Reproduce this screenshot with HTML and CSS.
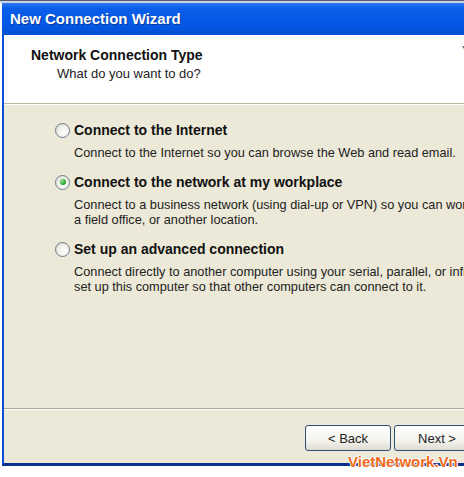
FILE: index.html
```html
<!DOCTYPE html>
<html lang="en">
<head>
  <meta charset="UTF-8" />
  <title>New Connection Wizard</title>
  <link rel="stylesheet" href="styles.css">
</head>
<body>
  <div class="desk-top"></div>
  <div class="window">
    <div class="titlebar">New Connection Wizard</div>

    <div class="header">
      <div class="header-text">
        <h1>Network Connection Type</h1>
        <p>What do you want to do?</p>
      </div>
      <div class="header-icon">Y</div>
    </div>

    <div class="body">
      <div class="options">
        <label class="option">
          <span class="radio"></span>
          <span class="option-title">Connect to the Internet</span>
        </label>
        <div class="option-desc">Connect to the Internet so you can browse the Web and read email.</div>

        <label class="option">
          <span class="radio checked"></span>
          <span class="option-title">Connect to the network at my workplace</span>
        </label>
        <div class="option-desc">Connect to a business network (using dial-up or VPN) so you can wor<br>a field office, or another location.</div>

        <label class="option">
          <span class="radio"></span>
          <span class="option-title">Set up an advanced connection</span>
        </label>
        <div class="option-desc">Connect directly to another computer using your serial, parallel, or infra<br>set up this computer so that other computers can connect to it.</div>
      </div>

      <div class="footer">
        <button class="btn">&lt; Back</button>
        <button class="btn">Next &gt;</button>
      </div>
    </div>
  </div>

  <div class="watermark">VietNetwork.Vn</div>
</body>
</html>
```

FILE: styles.css
```css
body {
  margin: 0;
  width: 464px;
  height: 477px;
  overflow: hidden;
  position: relative;
  background: #ffffff;
  font-family: 'Liberation Sans', Arial, sans-serif;
}

.desk-top {
  height: 3px;
  background: linear-gradient(#555b6e 0, #555b6e 1px, #c9d3e6 1px);
}

.window {
  margin-left: 2px;
  width: 480px;
  border-left: 2px solid #0a4fd4;
  border-bottom: 3px solid #0b2f8c;
  background: #ece9d8;
}

.titlebar {
  height: 32px;
  line-height: 31px;
  margin-left: -2px;
  padding-left: 8px;
  color: #fff;
  font-size: 15px;
  font-weight: bold;
  background: linear-gradient(#2e79f0 0%, #0a5ee8 15%, #0457e4 70%, #0350d2 100%);
  text-shadow: 1px 1px 0 #0a3a9a;
}

.header {
  height: 68px;
  background: #ffffff;
  border-bottom: 1px solid #b8b4a2;
  box-shadow: 0 1px 0 #ffffff;
  display: flex;
  justify-content: space-between;
}

.header-text {
  padding: 12px 0 0 27px;
}

.header h1 {
  margin: 0;
  font-size: 14px;
  font-weight: bold;
  color: #111;
  line-height: 17px;
}

.header p {
  margin: 2px 0 0 26px;
  font-size: 13px;
  color: #222;
  line-height: 16px;
}

.header-icon {
  width: 10px;
  padding-top: 9px;
  margin-right: 12px;
  font-size: 11px;
  color: #333;
}

.body {
  padding-top: 18px;
}

.options {
  padding-left: 51px;
  height: 286px;
}

.option {
  display: flex;
  align-items: center;
  height: 16px;
  gap: 4px;
}

.option-title {
  font-size: 14px;
  font-weight: bold;
  color: #111;
}

.radio {
  width: 13px;
  height: 13px;
  border: 1px solid #6c7c8c;
  border-radius: 50%;
  background: radial-gradient(circle at 65% 65%, #ffffff 0%, #f2f1ec 45%, #d4d2c8 100%);
  position: relative;
  box-sizing: content-box;
}

.radio.checked::after {
  content: "";
  position: absolute;
  left: 3.5px;
  top: 3.5px;
  width: 6px;
  height: 6px;
  border-radius: 50%;
  background: radial-gradient(circle at 35% 35%, #9be39b 0%, #2fae2f 55%, #1c7a1c 100%);
}

.option-desc {
  margin: 7px 0 14px 19px;
  font-size: 12.75px;
  line-height: 15px;
  color: #222;
  white-space: nowrap;
}

.footer {
  border-top: 1px solid #aca899;
  box-shadow: inset 0 1px 0 #ffffff;
  padding: 16px 0 12px 301px;
  display: flex;
  gap: 3px;
}

.btn {
  width: 86px;
  height: 26px;
  font-family: 'Liberation Sans', Arial, sans-serif;
  font-size: 13px;
  color: #222;
  border: 1px solid #2b4e7a;
  border-radius: 3px;
  background: linear-gradient(#ffffff 0%, #f4f3ee 60%, #dedcd2 100%);
  padding: 0;
}

.watermark {
  position: absolute;
  left: 348px;
  top: 453px;
  font-family: 'Liberation Sans', Arial, sans-serif;
  font-size: 15px;
  font-weight: bold;
  color: #ee6a1c;
  text-shadow: -1px 0 0 #fff, 1px 0 0 #fff, 0 -1px 0 #fff, 0 1px 0 #fff;
}
```
